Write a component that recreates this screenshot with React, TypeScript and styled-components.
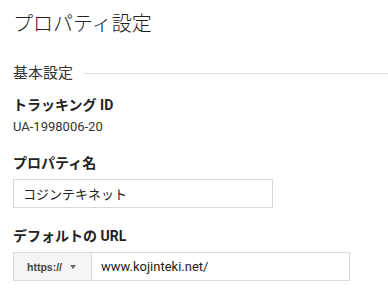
import styled, { createGlobalStyle } from 'styled-components'

const GlobalStyle = createGlobalStyle`
  body {
    margin: 0;
    background: #fff;
    font-family: Roboto, "Noto Sans CJK JP", sans-serif;
    color: #333;
  }
`

const Page = styled.div`
  padding: 9px 0 0 13px;
  width: 375px;
  overflow: hidden;
`

const Title = styled.h1`
  margin: 0;
  font-size: 20px;
  font-weight: 300;
  line-height: 30px;
  color: #222;
`

const Section = styled.div`
  display: flex;
  align-items: center;
  gap: 10px;
  margin-top: 24px;
  margin-right: -13px;
`

const SectionTitle = styled.h2`
  margin: 0;
  font-size: 15px;
  font-weight: 400;
  line-height: 20px;
  color: #333;
`

const Rule = styled.div`
  flex: 1;
  height: 1px;
  background: #e0e0e0;
`

const Field = styled.div<{ $gap?: number }>`
  margin-top: ${p => p.$gap ?? 14}px;
`

const Label = styled.div`
  font-size: 14px;
  font-weight: 700;
  line-height: 20px;
  color: #222;
`

const Value = styled.div`
  font-size: 13px;
  line-height: 18px;
  margin-top: 3px;
  color: #333;
`

const TextBox = styled.div<{ $width: number }>`
  box-sizing: border-box;
  width: ${p => p.$width}px;
  height: 29px;
  border: 1px solid #d9d9d9;
  display: flex;
  align-items: center;
  padding: 0 9px;
  font-size: 13px;
  color: #222;
  background: #fff;
`

const Row = styled.div`
  display: flex;
  margin-top: 6px;
`

const Select = styled.div`
  box-sizing: border-box;
  width: 78px;
  height: 29px;
  border: 1px solid #d9d9d9;
  border-right: none;
  background: #f4f4f4;
  display: flex;
  align-items: center;
  gap: 8px;
  padding-left: 13px;
  font-size: 10.5px;
  font-weight: 700;
  font-family: "Liberation Sans", Arial, sans-serif;
  color: #444;
`

const Caret = styled.span`
  width: 0;
  height: 0;
  border-left: 3.5px solid transparent;
  border-right: 3.5px solid transparent;
  border-top: 4px solid #666;
`

export default function App() {
  return (
    <>
      <GlobalStyle />
      <Page>
        <Title>プロパティ設定</Title>
        <Section>
          <SectionTitle>基本設定</SectionTitle>
          <Rule />
        </Section>
        <Field $gap={12}>
          <Label>トラッキング ID</Label>
          <Value>UA-1998006-20</Value>
        </Field>
        <Field $gap={17}>
          <Label>プロパティ名</Label>
          <Row>
            <TextBox $width={260}>コジンテキネット</TextBox>
          </Row>
        </Field>
        <Field $gap={18}>
          <Label>デフォルトの URL</Label>
          <Row>
            <Select>
              https://
              <Caret />
            </Select>
            <TextBox $width={259}>www.kojinteki.net/</TextBox>
          </Row>
        </Field>
      </Page>
    </>
  )
}
